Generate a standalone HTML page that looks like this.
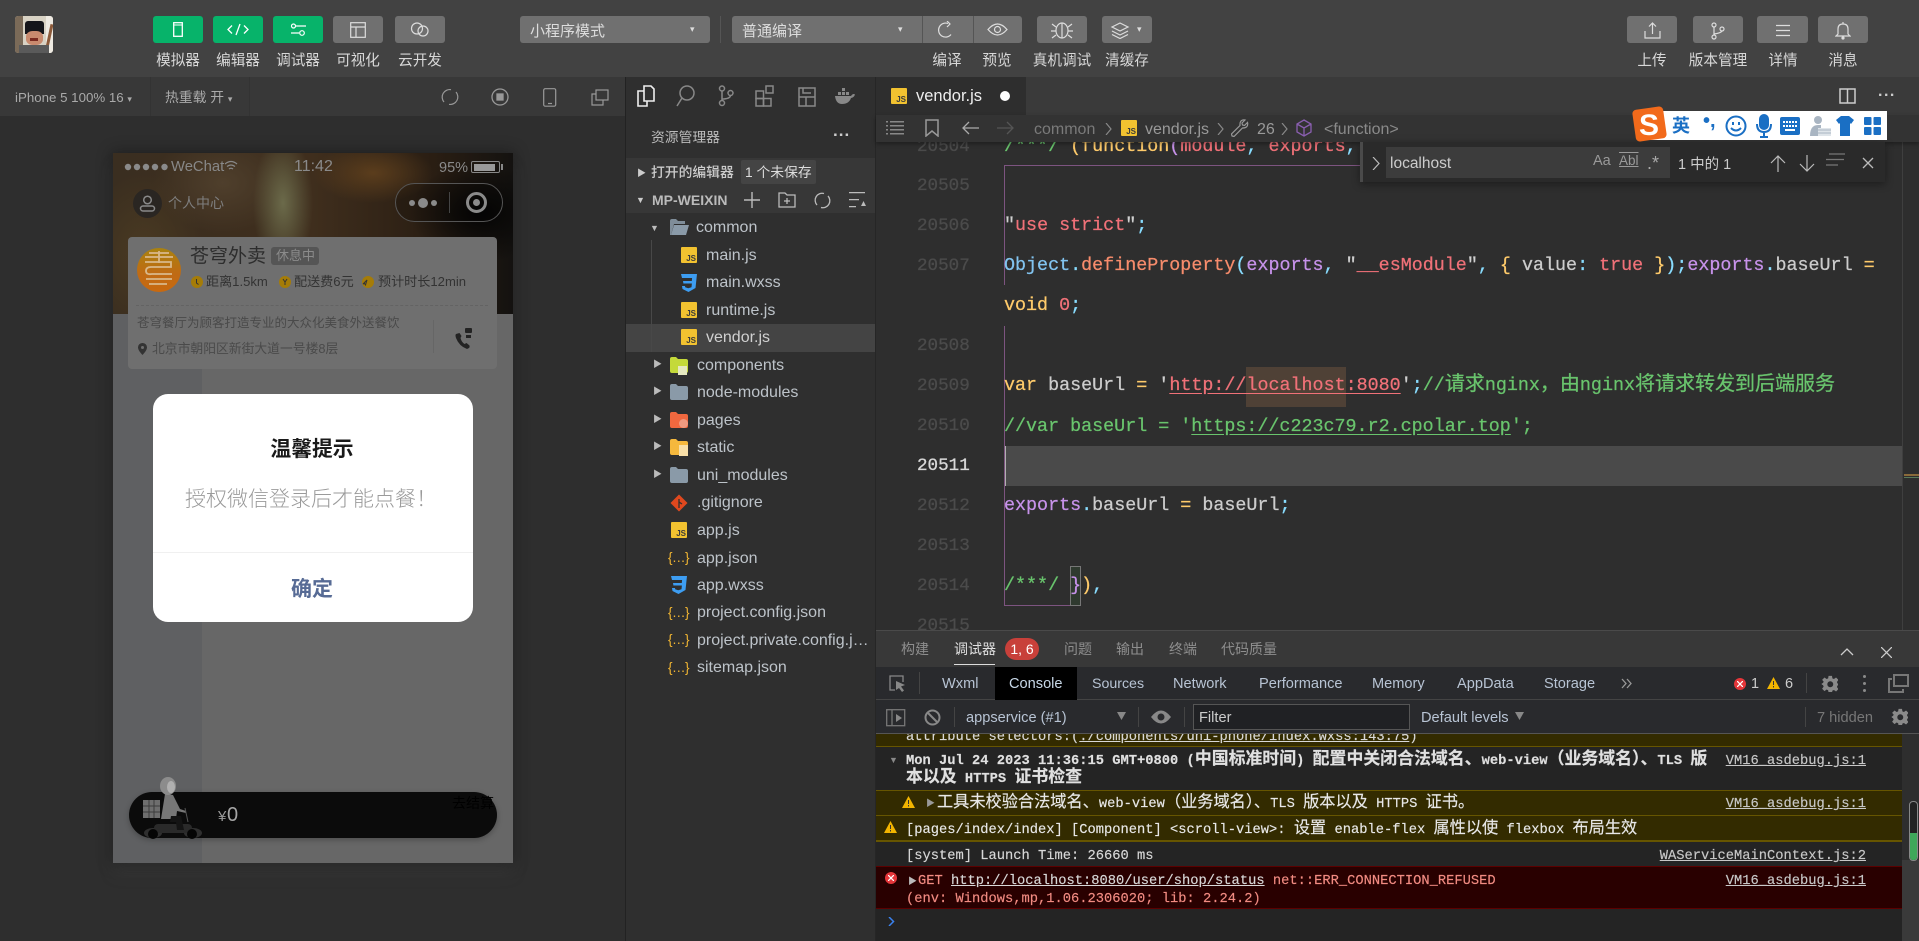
<!DOCTYPE html>
<html><head><meta charset="utf-8"><title>微信开发者工具</title>
<style>
*{box-sizing:border-box;margin:0;padding:0}
html,body{width:1919px;height:941px;overflow:hidden;background:#2e2e2e}
body{position:relative;font-family:"Liberation Sans","Noto Sans CJK SC",sans-serif;color:#ccc}
.a,.t,.c,svg.i{position:absolute}
.t,.c{white-space:nowrap;line-height:20px}
.c{transform:translateX(-50%)}
.b{position:absolute;top:16px;height:27px;width:50px;background:#707070;border-radius:3px}
.g{background:#07b36a}
.l{font-size:14.6px;color:#d8d8d8;top:51px}
.cd{position:absolute;left:1004px;font:18.36px/20px "Liberation Mono",monospace;white-space:pre;-webkit-text-stroke:.25px;color:#ccc}
.cd i{font:20px/0 "Noto Sans CJK SC",sans-serif}
.n{position:absolute;left:917px;font:17.6px/20px "Liberation Mono",monospace;color:#4b4b4b;-webkit-text-stroke:.3px}
.R{color:#f07178}.Y{color:#ffcb6b}.B{color:#89ddff}.P{color:#c792ea}.G{color:#69c46d}.U{color:#82c4f0}.O{color:#f78c6c}.W{color:#d0d0d0}
.f{font-size:16px;color:#bdc3c9}
.js{position:absolute;width:16px;height:16px;background:#f2c230;color:#3a3a3a;font:bold 8px/9px "Liberation Sans",sans-serif;text-align:right;padding:7px 1px 0 0;border-radius:1px}
.je{position:absolute;color:#f2b632;font:13.5px/20px "Liberation Sans",sans-serif;letter-spacing:-.5px;white-space:nowrap}
.tw{font-size:14px;color:#8e8e8e;top:639px}
.dv{font-size:14.6px;color:#b8c4d4;top:674px}
.m{position:absolute;font:13.75px/20px "Liberation Mono",monospace;white-space:pre;color:#d8d8d8;-webkit-text-stroke:.15px}
.m i{font:16.2px/0 "Noto Sans CJK SC",sans-serif}
.m.bd{font-weight:bold}
.m.bd i{font:bold 16.9px/0 "Noto Sans CJK SC",sans-serif}
.lk{left:auto;right:53px;text-decoration:underline;color:#c8c8c8}
.s{stroke:#bbb;fill:none;stroke-width:1.4}
</style></head><body>
<svg width="0" height="0" style="position:absolute"><defs>
<symbol id="fo" viewBox="0 0 18 16"><path d="M0 2q0-2 2-2h4l2 2h8q2 0 2 2v10q0 2-2 2H2q-2 0-2-2z"/></symbol>
<symbol id="css" viewBox="0 0 18 18"><path d="M1 0h16l-1.500 14L8.500 18 2.500 15l-.5-3h3l.2 1.200 3 1 3.300-1 .4-3.700H3.400L3 7h8.800l.3-3H2z" fill="#3d9df2"/></symbol>
<symbol id="ge" viewBox="0 0 20 20"><path fill-rule="evenodd" d="M8 0h4l.5 3 1.800.8L16.800 2l2.800 2.800-1.800 2.500.8 1.900 3 .5v1l-3 .6-.8 1.900 1.800 2.500-2.800 2.800-2.500-1.800-1.800.8L12 20H8l-.5-3-1.800-.8L3.200 18 .4 15.200l1.800-2.500-.8-1.900-3-.6v-1l3-.5.800-1.900L.4 4.800 3.200 2l2.500 1.800L7.500 3zM10 6.500a3.500 3.500 0 100 7 3.500 3.500 0 000-7z" fill="#8a8a8a"/></symbol>
</defs></svg>

<!-- code layer -->
<div class="a" style="left:876px;top:115px;width:1043px;height:520px;background:#2e2e2e"></div>
<div class="a" style="left:1004px;top:446px;width:898px;height:40px;background:#4a4a4a"></div>
<div class="a" style="left:1004px;top:446px;width:2px;height:40px;background:#b0b0b0"></div>
<div class="a" style="left:1246px;top:367px;width:100px;height:40px;background:#4f4136"></div>
<div class="a" style="left:1004px;top:165px;width:356px;height:1px;background:#7d5480"></div>
<div class="a" style="left:1004px;top:165px;width:1px;height:120px;background:#7d5480"></div>
<div class="a" style="left:1004px;top:326px;width:1px;height:280px;background:#7d5480"></div>
<div class="a" style="left:1004px;top:605px;width:76px;height:1px;background:#7d5480"></div>
<div class="a" style="left:1070px;top:566px;width:11px;height:40px;background:#2f3a2f;border:1px solid #777"></div>

<div class="n" style="top:137px">20504</div><div class="n" style="top:176px">20505</div><div class="n" style="top:216px">20506</div><div class="n" style="top:256px">20507</div><div class="n" style="top:336px">20508</div><div class="n" style="top:376px">20509</div><div class="n" style="top:416px">20510</div><div class="n" style="top:456px;color:#d8d8d8">20511</div><div class="n" style="top:496px">20512</div><div class="n" style="top:536px">20513</div><div class="n" style="top:576px">20514</div><div class="n" style="top:616px">20515</div>

<div class="cd" style="top:137px"><span class="G">/***/</span> <span class="Y">(function</span><span class="P">(</span><span class="R">module</span><span class="B">,</span> <span class="R">exports</span><span class="B">,</span></div>
<div class="cd" style="top:216px"><span class="W">"</span><span class="R">use strict</span><span class="W">"</span><span class="B">;</span></div>
<div class="cd" style="top:256px"><span class="U">Object</span><span class="B">.</span><span class="O">defineProperty</span><span class="B">(</span><span class="P">exports</span><span class="B">,</span> <span class="W">"</span><span class="R">__esModule</span><span class="W">"</span><span class="B">,</span> <span class="Y">{</span> value<span class="B">:</span> <span class="R">true</span> <span class="Y">}</span><span class="B">);</span><span class="P">exports</span><span class="B">.</span>baseUrl <span class="Y">=</span></div>
<div class="cd" style="top:296px"><span class="Y">void</span> <span class="R">0</span><span class="B">;</span></div>
<div class="cd" style="top:376px"><span class="Y">var</span> baseUrl <span class="Y">=</span> <span class="W">'</span><span class="R" style="text-decoration:underline;text-underline-offset:3px">http://localhost:8080</span><span class="W">'</span><span class="B">;</span><span class="G">//<i>请求</i>nginx<i>，由</i>nginx<i>将请求转发到后端服务</i></span></div>
<div class="cd" style="top:417px"><span class="G">//var baseUrl = '<span style="text-decoration:underline;text-underline-offset:3px">https://c223c79.r2.cpolar.top</span>';</span></div>
<div class="cd" style="top:496px"><span class="P">exports</span><span class="B">.</span>baseUrl <span class="Y">=</span> baseUrl<span class="B">;</span></div>
<div class="cd" style="top:576px"><span class="G">/***/</span> <span class="P">}</span><span class="Y">)</span><span class="B">,</span></div>

<!-- minimap -->
<div class="a" style="left:1902px;top:115px;width:1px;height:515px;background:#3f3f3f"></div>
<div class="a" style="left:1904px;top:474px;width:15px;height:2px;background:#8a6a3a"></div>
<div class="a" style="left:1904px;top:477px;width:15px;height:1px;background:#5a7a5a"></div>

<!-- main toolbar -->
<div class="a" style="left:0;top:0;width:1919px;height:77px;background:#424242"></div>
<!-- avatar -->
<div class="a" style="left:15px;top:16px;width:38px;height:37px;border-radius:3px;overflow:hidden;background:#d8d2c4">
 <div class="a" style="left:0;top:0;width:8px;height:37px;background:#7a6a58"></div>
 <div class="a" style="left:31px;top:0;width:7px;height:37px;background:#eeeae2"></div>
 <div class="a" style="left:33px;top:8px;width:3px;height:24px;background:#8c5a3a;transform:rotate(12deg)"></div>
 <div class="a" style="left:10px;top:5px;width:19px;height:13px;background:#15151a;border-radius:3px 3px 0 0"></div>
 <div class="a" style="left:11px;top:15px;width:17px;height:14px;background:#c98a6e;border-radius:40%"></div>
 <div class="a" style="left:4px;top:29px;width:30px;height:8px;background:#5a5a5a"></div>
 <div class="a" style="left:15px;top:22px;width:8px;height:3px;background:#7a2a20"></div>
</div>

<div class="b g" style="left:153px"><svg class="i" style="left:20px;top:6px" width="10" height="15"><rect x=".7" y=".7" width="8.600" height="13.600" fill="none" stroke="#fff" stroke-width="1.300"/><path d="M1 3h8" stroke="#fff"/></svg></div>
<div class="b g" style="left:213px"><svg class="i" style="left:14px;top:7px" width="22" height="13" fill="none" stroke="#fff" stroke-width="1.300"><path d="M5 2.500 1 6.500l4 4M17 2.500l4 4-4 4M13 1 9 12"/></svg></div>
<div class="b g" style="left:273px"><svg class="i" style="left:17px;top:7px" width="17" height="14" fill="none" stroke="#fff" stroke-width="1.200"><circle cx="3.500" cy="3" r="2"/><path d="M6 3h10M1 10h8"/><circle cx="12" cy="10" r="2.300"/></svg></div>
<div class="b" style="left:333px"><svg class="i" style="left:17px;top:6px" width="16" height="16" fill="none" stroke="#ddd" stroke-width="1.200"><rect x=".7" y=".7" width="14.600" height="14.600"/><path d="M1 5h14M6 5v10"/></svg></div>
<div class="b" style="left:395px"><svg class="i" style="left:15px;top:6px" width="20" height="15" fill="none" stroke="#ddd" stroke-width="1.200"><circle cx="7" cy="6.500" r="5.500"/><circle cx="13" cy="9" r="5"/></svg></div>
<div class="c l" style="left:178px">模拟器</div><div class="c l" style="left:238px">编辑器</div><div class="c l" style="left:298px">调试器</div><div class="c l" style="left:358px">可视化</div><div class="c l" style="left:420px">云开发</div>

<div class="b" style="left:520px;width:190px"></div>
<div class="t" style="left:530px;top:22px;font-size:15px;color:#ddd">小程序模式</div>
<div class="t" style="left:690px;top:19px;font-size:9px;color:#ddd">▾</div>
<div class="a" style="left:720px;top:16px;width:1px;height:27px;background:#555"></div>
<div class="b" style="left:732px;width:290px"></div>
<div class="a" style="left:922px;top:16px;width:1px;height:27px;background:#555"></div>
<div class="a" style="left:973px;top:16px;width:1px;height:27px;background:#555"></div>
<div class="t" style="left:742px;top:22px;font-size:15px;color:#ddd">普通编译</div>
<div class="t" style="left:898px;top:19px;font-size:9px;color:#ddd">▾</div>
<svg class="i" style="left:936px;top:21px" width="20" height="18" fill="none" stroke="#ddd" stroke-width="1.200"><path d="M15 13.500A7 7 0 1 1 12 2.500"/><path d="M11 0l3 3-3 3"/></svg>
<svg class="i" style="left:987px;top:22px" width="21" height="15" fill="none" stroke="#ddd" stroke-width="1.200"><path d="M1 7.500Q10.500-3.500 20 7.500 10.500 18.500 1 7.500z"/><circle cx="10.500" cy="7.500" r="3"/></svg>
<div class="b" style="left:1037px"></div>
<svg class="i" style="left:1050px;top:20px" width="24" height="19" fill="none" stroke="#ddd" stroke-width="1.200"><ellipse cx="12" cy="10.500" rx="6" ry="7.500"/><path d="M12 3v15M6 7 2 4M6 11H1M6 15l-4 3M18 7l4-3M18 11h5M18 15l4 3"/></svg>
<div class="b" style="left:1102px"></div>
<svg class="i" style="left:1110px;top:22px" width="20" height="17" fill="none" stroke="#ddd" stroke-width="1.200"><path d="M10 1l8 4-8 4-8-4zM2 9l8 4 8-4M2 12.500l8 4 8-4"/></svg>
<div class="t" style="left:1137px;top:19px;font-size:9px;color:#ddd">▾</div>
<div class="c l" style="left:947px">编译</div><div class="c l" style="left:997px">预览</div><div class="c l" style="left:1062px">真机调试</div><div class="c l" style="left:1127px">清缓存</div>

<div class="b" style="left:1627px"></div><svg class="i" style="left:1644px;top:22px" width="17" height="17" fill="none" stroke="#ddd" stroke-width="1.200"><path d="M8.500 12V1M5 4.500 8.500 1 12 4.500M1 9v7h15V9"/></svg>
<div class="b" style="left:1693px"></div><svg class="i" style="left:1711px;top:22px" width="14" height="18" fill="none" stroke="#ddd" stroke-width="1.200"><circle cx="3" cy="3" r="2"/><circle cx="3" cy="15" r="2"/><circle cx="11" cy="7" r="2"/><path d="M3 5v8M3 12q7-1 8-3"/></svg>
<div class="b" style="left:1757px;width:51px"></div><svg class="i" style="left:1776px;top:24px" width="14" height="13" stroke="#ddd" stroke-width="1.200"><path d="M0 1.500h14M0 6.500h14M0 11.500h14"/></svg>
<div class="b" style="left:1818px"></div><svg class="i" style="left:1835px;top:21px" width="16" height="19" fill="none" stroke="#ddd" stroke-width="1.200"><path d="M8 3q-5 0-5 5v5l-2 2h14l-2-2V8q0-5-5-5zM8 1v2"/><circle cx="8" cy="17" r="1" fill="#ddd"/></svg>
<div class="c l" style="left:1652px">上传</div><div class="c l" style="left:1718px">版本管理</div><div class="c l" style="left:1783px">详情</div><div class="c l" style="left:1843px">消息</div>

<!-- simulator -->
<div class="a" style="left:0;top:77px;width:625px;height:39px;background:#383838"></div>
<div class="a" style="left:150px;top:77px;width:1px;height:39px;background:#333"></div>
<div class="a" style="left:249px;top:77px;width:1px;height:39px;background:#333"></div>
<div class="t" style="left:15px;top:88px;font-size:13.300px;color:#aaa">iPhone 5 100% 16 <span style="font-size:9px">▾</span></div>
<div class="t" style="left:165px;top:88px;font-size:13.800px;color:#aaa">热重载 开 <span style="font-size:9px">▾</span></div>
<svg class="i" style="left:441px;top:88px" width="18" height="18" fill="none" stroke="#999" stroke-width="1.200"><path d="M3 14A7.500 7.500 0 0 1 10 1.700M15 4a7.500 7.500 0 0 1-7 12.300"/></svg>
<svg class="i" style="left:491px;top:88px" width="18" height="18" fill="none" stroke="#999" stroke-width="1.300"><circle cx="9" cy="9" r="8"/><rect x="6" y="6" width="6" height="6" fill="#999"/></svg>
<svg class="i" style="left:543px;top:88px" width="14" height="19" fill="none" stroke="#999" stroke-width="1.200"><rect x=".7" y=".7" width="12" height="17.500" rx="1.500"/><path d="M5 15.500h4"/></svg>
<svg class="i" style="left:591px;top:89px" width="18" height="17" fill="none" stroke="#999" stroke-width="1.200"><rect x="5" y="1" width="12" height="10"/><path d="M5 5H1v11h11v-5"/></svg>

<!-- phone -->
<div class="a" style="left:113px;top:153px;width:400px;height:710px;background:#676767;box-shadow:0 0 14px 2px rgba(0,0,0,.3),0 12px 14px rgba(90,90,90,.18)"></div>
<div class="a" style="left:113px;top:153px;width:89px;height:710px;background:#5f6062"></div>
<div class="a" style="left:113px;top:153px;width:400px;height:161px;background:
 radial-gradient(ellipse 30px 70px at 170px 50px,#6b6a4a 0,rgba(107,106,74,0) 100%),
 radial-gradient(ellipse 70px 50px at 110px 30px,#4f3f2c 0,rgba(79,63,44,0) 100%),
 radial-gradient(ellipse 60px 30px at 260px 20px,#5b3d1c 0,rgba(91,61,28,0) 100%),
 radial-gradient(ellipse 70px 50px at 367px 60px,#040404 0,rgba(4,4,4,0) 100%),
 radial-gradient(ellipse 60px 80px at 30px 100px,#4a3a22 0,rgba(74,58,34,0) 100%),
 linear-gradient(90deg,#3a2e20,#3f2e1d 50%,#2a1e13 80%,#141210);overflow:hidden"></div>

<svg class="i" style="left:124px;top:163px" width="46" height="8" fill="#8a8a8a"><circle cx="4" cy="4" r="3.200"/><circle cx="13" cy="4" r="3.200"/><circle cx="22" cy="4" r="3.200"/><circle cx="31" cy="4" r="3.200"/><circle cx="40.500" cy="4" r="3.200"/></svg>
<div class="t" style="left:171px;top:157px;font-size:14.800px;color:#888">WeChat</div>
<svg class="i" style="left:224px;top:160px" width="14" height="12" fill="none" stroke="#888" stroke-width="1.300"><path d="M1 4q6-5 12 0M3 6.500q4-3 8 0M5 9q2-1.500 4 0"/></svg>
<div class="t" style="left:294px;top:157px;font-size:16px;color:#8a8a8a">11:42</div>
<div class="t" style="left:439px;top:158px;font-size:14.500px;color:#8a8a8a">95%</div>
<div class="a" style="left:471px;top:161px;width:29px;height:12px;border:1px solid #888;border-radius:2px;padding:1.500px"><div style="width:21px;height:7px;background:#999"></div></div>
<div class="a" style="left:501px;top:164px;width:2px;height:6px;background:#888"></div>

<div class="a" style="left:133px;top:189px;width:29px;height:29px;border-radius:50%;background:#2a2622"></div>
<svg class="i" style="left:139px;top:195px" width="17" height="17" fill="none" stroke="#8a8a8a" stroke-width="1.500"><circle cx="8.500" cy="5" r="3.800"/><rect x="1.500" y="11" width="14" height="5" rx="2.500"/></svg>
<div class="t" style="left:168px;top:193px;font-size:14px;color:#7e7e7e">个人中心</div>
<div class="a" style="left:395px;top:183px;width:108px;height:39px;border:1px solid #555;border-radius:20px;background:rgba(5,5,5,.2)"></div>
<div class="a" style="left:409px;top:200px;width:6px;height:6px;border-radius:50%;background:#8a8a8a"></div><div class="a" style="left:418px;top:198px;width:10px;height:10px;border-radius:50%;background:#8a8a8a"></div><div class="a" style="left:431px;top:200px;width:6px;height:6px;border-radius:50%;background:#8a8a8a"></div>
<div class="a" style="left:449px;top:192px;width:1px;height:21px;background:#444"></div>
<div class="a" style="left:466px;top:192px;width:21px;height:21px;border:3px solid #8a8a8a;border-radius:50%"></div><div class="a" style="left:473px;top:199px;width:7px;height:7px;background:#8a8a8a;border-radius:50%"></div>

<!-- card -->
<div class="a" style="left:128px;top:237px;width:369px;height:132px;background:#6f6f6f;border-radius:4px"></div>
<div class="a" style="left:137px;top:248px;width:44px;height:44px;border-radius:50%;background:linear-gradient(#a9820f,#c06a14 60%,#c8690f)"></div>
<svg class="i" style="left:137px;top:248px" width="44" height="44" fill="none" stroke="#d9b88a" stroke-width="1.800"><path d="M12 5h20M8 9h28M22 3v12M8 14h26v5H14q-5 0-5 4t6 3h20M9 31h26M12 36h18"/></svg>
<div class="t" style="left:190px;top:247px;font-size:19px;color:#2d2d2d">苍穹外卖</div>
<div class="a" style="left:271px;top:247px;width:48px;height:18px;background:#555;border-radius:3px"></div>
<div class="t" style="left:276px;top:246px;font-size:13px;color:#8b8b8b">休息中</div>
<div class="a" style="left:191px;top:276px;width:12px;height:12px;border-radius:50%;background:#a57c08"></div><div class="a" style="left:279px;top:276px;width:12px;height:12px;border-radius:50%;background:#a57c08"></div><div class="a" style="left:362px;top:276px;width:12px;height:12px;border-radius:50%;background:#a57c08"></div>
<svg class="i" style="left:191px;top:276px" width="190" height="12" fill="none" stroke="#333" stroke-width="1"><path d="M5.500 3v4l2 1.500M92 3l2 3 2-3M94 6v3M172 8l4-4-1.500 5-1-1.500z"/></svg>
<div class="t" style="left:206px;top:272px;font-size:13.100px;color:#333">距离1.5km</div>
<div class="t" style="left:294px;top:272px;font-size:13.100px;color:#333">配送费6元</div>
<div class="t" style="left:378px;top:272px;font-size:13.100px;color:#333">预计时长12min</div>
<div class="a" style="left:136px;top:305px;width:352px;border-top:1px dashed #636363"></div>
<div class="t" style="left:137px;top:313px;font-size:12.500px;color:#4a4a4a">苍穹餐厅为顾客打造专业的大众化美食外送餐饮</div>
<svg class="i" style="left:138px;top:343px" width="9" height="12"><path fill-rule="evenodd" d="M4.500 0A4.400 4.400 0 0 0 0 4.500C0 7.500 4.500 12 4.500 12S9 7.500 9 4.500A4.400 4.400 0 0 0 4.500 0zm0 3a1.500 1.500 0 1 1 0 3 1.500 1.500 0 0 1 0-3z" fill="#333"/></svg>
<div class="t" style="left:152px;top:339px;font-size:12.800px;color:#4a4a4a">北京市朝阳区新街大道一号楼8层</div>
<div class="a" style="left:433px;top:320px;width:1px;height:33px;background:#666"></div>
<svg class="i" style="left:455px;top:327px" width="19" height="22"><path d="M1 7q-1 1 0 4 3 8 11 11l2-1q1-1 .5-2.500l-3-2.500-2 1q-3-2-4-6l1-2-2-3z" fill="#232323"/><rect x="10" y="1" width="7" height="5" rx="1" fill="#232323"/><path d="M11 8h5v3h-5z" fill="#232323"/></svg>

<!-- dialog -->
<div class="a" style="left:153px;top:394px;width:320px;height:228px;background:#fff;border-radius:15px"></div>
<div class="c" style="left:312px;top:440px;font-size:20.800px;font-weight:bold;color:#1a1a1a">温馨提示</div>
<div class="t" style="left:185px;top:490px;font-size:21px;color:#9a9a9a;font-weight:300">授权微信登录后才能点餐！</div>
<div class="a" style="left:153px;top:552px;width:320px;height:1px;background:#f0f0f0"></div>
<div class="c" style="left:312px;top:580px;font-size:21px;font-weight:bold;color:#576b95">确定</div>

<!-- cart -->
<div class="a" style="left:129px;top:792px;width:368px;height:46px;background:#0b0b0b;border-radius:23px;box-shadow:0 2px 6px rgba(0,0,0,.25)"></div>
<svg class="i" style="left:140px;top:776px" width="64" height="64">
 <rect x="3" y="24" width="17" height="18" fill="#6e6e6e"/><path d="M3 30h17M3 36h17M9 24v18M14 24v18" stroke="#3c3c3c"/>
 <ellipse cx="13" cy="57" rx="9" ry="5" fill="#2f2f2f"/><ellipse cx="53" cy="57" rx="9" ry="5" fill="#2f2f2f"/><rect x="14" y="48" width="38" height="9" rx="4" fill="#2a2a2a"/>
 <circle cx="13" cy="58" r="5" fill="#050505"/><circle cx="52" cy="58" r="5" fill="#050505"/>
 <path d="M25 18l8 1 7 14 6 2v2l-9-2-1 8H21z" fill="#777"/><path d="M31 40h10l3 14h-7l-1-8h-6z" fill="#141414"/>
 <ellipse cx="28" cy="10" rx="8" ry="9" fill="#8c8c8c"/><ellipse cx="31" cy="11" rx="4" ry="6" fill="#b0b0b0"/><path d="M45 32l3 14" stroke="#555"/>
</svg>
<div class="t" style="left:218px;top:807px;font-size:15px;color:#9a9a9a">¥</div>
<div class="t" style="left:227px;top:805px;font-size:20px;color:#a5a5a5">0</div>
<div class="t" style="left:452px;top:793px;font-size:14px;color:#000">去结算</div>

<!-- file tree -->
<div class="a" style="left:625px;top:77px;width:1px;height:864px;background:#222"></div>
<div class="a" style="left:626px;top:77px;width:250px;height:864px;background:#2f2f2f"></div>
<div class="a" style="left:875px;top:77px;width:1px;height:864px;background:#262626"></div>
<svg class="i" style="left:637px;top:85px" width="18" height="22" fill="none" stroke="#eee" stroke-width="1.600"><path d="M7 1h7l3 3v12H7zM7 6H1v15h9v-5"/></svg>
<svg class="i" style="left:676px;top:85px" width="20" height="22" fill="none" stroke="#888" stroke-width="1.500"><circle cx="11" cy="8" r="7"/><path d="M6 13l-5 8"/></svg>
<svg class="i" style="left:718px;top:85px" width="16" height="22" fill="none" stroke="#888" stroke-width="1.500"><circle cx="4" cy="3.500" r="2.500"/><circle cx="4" cy="18" r="2.500"/><circle cx="12.500" cy="8" r="2.500"/><path d="M4 6v9.500M4 14q8 0 8.500-3.500"/></svg>
<svg class="i" style="left:755px;top:85px" width="19" height="22" fill="none" stroke="#888" stroke-width="1.500"><rect x="1" y="6" width="7.500" height="7.500"/><rect x="1" y="13.500" width="7.500" height="7.500"/><rect x="8.500" y="13.500" width="7.500" height="7.500"/><rect x="11" y="1" width="7" height="7"/></svg>
<svg class="i" style="left:798px;top:87px" width="18" height="20" fill="none" stroke="#888" stroke-width="1.500"><rect x="1" y="1" width="16" height="18"/><path d="M1 10h16M5 1v5h8M8 10v9"/></svg>
<svg class="i" style="left:835px;top:88px" width="21" height="16"><path d="M0 8h16q2-3 4-1.500-1 3-4 3.500-2 6-9 6Q1 16 0 8z" fill="#888"/><rect x="3" y="4" width="3" height="3" fill="#888"/><rect x="7" y="4" width="3" height="3" fill="#888"/><rect x="11" y="4" width="3" height="3" fill="#888"/><rect x="7" y="0" width="3" height="3" fill="#888"/></svg>
<div class="t" style="left:651px;top:128px;font-size:13.800px;color:#bbb">资源管理器</div>
<div class="t" style="left:833px;top:121px;font-size:17px;font-weight:bold;color:#ccc;letter-spacing:1px">...</div>

<div class="a" style="left:626px;top:158px;width:249px;height:55px;background:#373737"></div>
<div class="t" style="left:637px;top:163px;font-size:9px;color:#ccc">▶</div>
<div class="t" style="left:651px;top:163px;font-size:13.800px;font-weight:500;color:#ccc">打开的编辑器</div>
<div class="a" style="left:741px;top:160px;width:75px;height:24px;background:#444;border-radius:2px"></div>
<div class="t" style="left:745px;top:163px;font-size:13.800px;color:#ddd">1 个未保存</div>
<div class="t" style="left:636px;top:190px;font-size:9px;color:#ccc">▼</div>
<div class="t" style="left:652px;top:190px;font-size:14px;font-weight:bold;color:#bbb">MP-WEIXIN</div>
<svg class="i" style="left:744px;top:192px" width="16" height="16" stroke="#bbb" stroke-width="1.400"><path d="M8 0v16M0 8h16"/></svg>
<svg class="i" style="left:778px;top:192px" width="18" height="16" fill="none" stroke="#bbb" stroke-width="1.300"><path d="M1 1h6l2 2h8v12H1zM9 6v6M6 9h6"/></svg>
<svg class="i" style="left:814px;top:192px" width="17" height="17" fill="none" stroke="#bbb" stroke-width="1.300"><path d="M3 13A7 7 0 0 1 10 1.500M14 4a7 7 0 0 1-7 11.500"/></svg>
<svg class="i" style="left:849px;top:192px" width="17" height="16" fill="#bbb"><path d="M0 0h16v1.300H0zM0 7h10v1.300H0zM0 14h7v1.300H0zM12 14l2.500-5 2.500 5z"/></svg>

<div class="a" style="left:626px;top:324px;width:249px;height:28px;background:#444"></div>
<div class="a" style="left:651px;top:240px;width:1px;height:112px;background:#484848"></div>
<div class="t" style="left:650px;top:218px;font-size:9px;color:#bbb">▼</div>
<svg class="i" style="left:670px;top:219px" width="19" height="17"><path d="M0 2q0-2 2-2h4l2 2h7v3H4L1 16H0z" fill="#7f8d99"/><path d="M4 6h15l-3 10H1z" fill="#8a9aa8"/></svg>
<div class="t f" style="left:696px;top:218px">common</div>
<div class="js" style="left:681px;top:247px">JS</div><div class="t f" style="left:706px;top:246px">main.js</div>
<svg class="i" style="left:680px;top:274px" width="18" height="18"><use href="#css"/></svg><div class="t f" style="left:706px;top:273px">main.wxss</div>
<div class="js" style="left:681px;top:302px">JS</div><div class="t f" style="left:706px;top:301px">runtime.js</div>
<div class="js" style="left:681px;top:329px">JS</div><div class="t f" style="left:706px;top:328px;color:#d0d0d0">vendor.js</div>

<div class="t" style="left:653px;top:354px;font-size:9px;color:#bbb">▶</div>
<svg class="i" style="left:670px;top:357px" width="18" height="16" fill="#c4d93a"><use href="#fo"/></svg><div class="a" style="left:678px;top:366px;width:9px;height:9px;background:#e5e8c0"></div><div class="t f" style="left:697px;top:356px">components</div>
<div class="t" style="left:653px;top:381px;font-size:9px;color:#bbb">▶</div>
<svg class="i" style="left:670px;top:384px" width="18" height="16" fill="#8a9aa8"><use href="#fo"/></svg><div class="t f" style="left:697px;top:383px">node-modules</div>
<div class="t" style="left:653px;top:409px;font-size:9px;color:#bbb">▶</div>
<svg class="i" style="left:670px;top:412px" width="18" height="16" fill="#f0683f"><use href="#fo"/></svg><div class="a" style="left:679px;top:419px;width:9px;height:9px;background:#f09a80;border-radius:50%"></div><div class="t f" style="left:697px;top:411px">pages</div>
<div class="t" style="left:653px;top:436px;font-size:9px;color:#bbb">▶</div>
<svg class="i" style="left:670px;top:439px" width="18" height="16" fill="#f5b83d"><use href="#fo"/></svg><div class="a" style="left:679px;top:445px;width:9px;height:11px;background:#f8dfa8"></div><div class="t f" style="left:697px;top:438px">static</div>
<div class="t" style="left:653px;top:464px;font-size:9px;color:#bbb">▶</div>
<svg class="i" style="left:670px;top:467px" width="18" height="16" fill="#8a9aa8"><use href="#fo"/></svg><div class="t f" style="left:697px;top:466px">uni_modules</div>
<svg class="i" style="left:670px;top:494px" width="18" height="18"><rect x="3" y="3" width="12" height="12" transform="rotate(45 9 9)" fill="#e0481e"/><path d="M9 5v9M9 8l3 2" stroke="#2f2f2f" stroke-width="1.300"/></svg><div class="t f" style="left:697px;top:493px">.gitignore</div>
<div class="js" style="left:671px;top:522px">JS</div><div class="t f" style="left:697px;top:521px">app.js</div>
<div class="je" style="left:668px;top:548px">{…}</div><div class="t f" style="left:697px;top:549px">app.json</div>
<svg class="i" style="left:670px;top:576px" width="18" height="18"><use href="#css"/></svg><div class="t f" style="left:697px;top:576px">app.wxss</div>
<div class="je" style="left:668px;top:603px">{…}</div><div class="t f" style="left:697px;top:603px">project.config.json</div>
<div class="je" style="left:668px;top:630px">{…}</div><div class="t f" style="left:697px;top:631px;width:177px;overflow:hidden;text-overflow:ellipsis">project.private.config.json</div>
<div class="je" style="left:668px;top:658px">{…}</div><div class="t f" style="left:697px;top:658px">sitemap.json</div>

<!-- editor tabs -->
<div class="a" style="left:876px;top:77px;width:1043px;height:38px;background:#3a3a3a"></div>
<div class="a" style="left:876px;top:77px;width:150px;height:38px;background:#2e2e2e"></div>
<div class="js" style="left:891px;top:88px">JS</div>
<div class="t" style="left:916px;top:86px;font-size:16.500px;color:#eee">vendor.js</div>
<div class="a" style="left:1000px;top:91px;width:10px;height:10px;border-radius:50%;background:#fff"></div>
<svg class="i" style="left:1839px;top:88px" width="17" height="16" fill="none" stroke="#ccc" stroke-width="1.500"><rect x="1" y="1" width="15" height="14"/><path d="M8.500 1v14"/></svg>
<div class="t" style="left:1878px;top:82px;font-size:16px;font-weight:bold;color:#ccc;letter-spacing:1.500px">...</div>
<!-- breadcrumb -->
<div class="a" style="left:876px;top:115px;width:1043px;height:27px;background:#333;box-shadow:0 2px 4px rgba(0,0,0,.35)"></div>
<svg class="i" style="left:886px;top:121px" width="18" height="14" fill="#888"><path d="M0 0h2v1.500H0zM4 0h14v1.500H4zM0 4h2v1.500H0zM4 4h14v1.500H4zM0 8h2v1.500H0zM4 8h14v1.500H4zM0 12h2v1.500H0zM4 12h14v1.500H4z"/></svg>
<svg class="i" style="left:925px;top:119px" width="14" height="18" fill="none" stroke="#999" stroke-width="1.500"><path d="M1 1h12v16l-6-5-6 5z"/></svg>
<svg class="i" style="left:962px;top:121px" width="17" height="14" fill="none" stroke="#aaa" stroke-width="1.300"><path d="M17 7H1M7 1 1 7l6 6"/></svg>
<svg class="i" style="left:997px;top:121px" width="17" height="14" fill="none" stroke="#555" stroke-width="1.300"><path d="M0 7h16M10 1l6 6-6 6"/></svg>
<div class="t" style="left:1034px;top:120px;font-size:16px;color:#7a7a7a">common</div>
<svg class="i" style="left:1105px;top:123px" width="7" height="12" fill="none" stroke="#888" stroke-width="1.200"><path d="M1 0l5 6-5 6"/></svg>
<div class="js" style="left:1121px;top:120px">JS</div>
<div class="t" style="left:1145px;top:120px;font-size:16px;color:#999">vendor.js</div>
<svg class="i" style="left:1217px;top:123px" width="7" height="12" fill="none" stroke="#888" stroke-width="1.200"><path d="M1 0l5 6-5 6"/></svg>
<svg class="i" style="left:1231px;top:119px" width="18" height="18" fill="none" stroke="#999" stroke-width="1.200"><path d="M1 17l-.5-2L9 6.500Q8.500 1 13 .8l1 .2-3 3 .5 2 2 .5 3-3 .2 1Q17 9 11.500 9L3 17.500z"/></svg>
<div class="t" style="left:1257px;top:120px;font-size:16px;color:#999">26</div>
<svg class="i" style="left:1281px;top:123px" width="7" height="12" fill="none" stroke="#888" stroke-width="1.200"><path d="M1 0l5 6-5 6"/></svg>
<svg class="i" style="left:1296px;top:119px" width="16" height="18" fill="none" stroke="#8a5fb0" stroke-width="1.300"><path d="M8 1l7 4v8l-7 4-7-4V5zM1 5l7 4 7-4M8 9v8"/></svg>
<div class="t" style="left:1324px;top:120px;font-size:16px;color:#8a8a8a">&lt;function&gt;</div>

<!-- find widget -->
<div class="a" style="left:1360px;top:142px;width:525px;height:40px;background:#2a2a2a;border-left:3px solid #4a4a4a;box-shadow:0 2px 8px rgba(0,0,0,.4)"></div>
<svg class="i" style="left:1372px;top:157px" width="8" height="13" fill="none" stroke="#bbb" stroke-width="1.200"><path d="M1 0l6 6.500L1 13"/></svg>
<div class="a" style="left:1386px;top:147px;width:284px;height:31px;background:#3c3c3c"></div>
<div class="t" style="left:1390px;top:154px;font-size:15.500px;color:#ccc">localhost</div>
<div class="t" style="left:1593px;top:151px;font-size:14.500px;color:#9a9a9a">Aa</div>
<div class="t" style="left:1619px;top:151px;font-size:13.500px;color:#9a9a9a;text-decoration:underline overline">Abl</div>
<div class="t" style="left:1647px;top:153px;font-size:18px;color:#aaa">.*</div>
<div class="t" style="left:1678px;top:155px;font-size:14.500px;color:#ccc">1 中的 1</div>
<svg class="i" style="left:1770px;top:155px" width="16" height="17" fill="none" stroke="#bbb" stroke-width="1.200"><path d="M8 17V1M1 8l7-7 7 7"/></svg>
<svg class="i" style="left:1799px;top:155px" width="16" height="17" fill="none" stroke="#bbb" stroke-width="1.200"><path d="M8 0v16M1 9l7 7 7-7"/></svg>
<svg class="i" style="left:1826px;top:153px" width="19" height="13" stroke="#777" stroke-width="1.200"><path d="M3 1h16M0 6.500h18M0 12h12"/></svg>
<svg class="i" style="left:1862px;top:157px" width="12" height="12" stroke="#bbb" stroke-width="1.300"><path d="M1 1l10 10M11 1 1 11"/></svg>

<!-- sogou -->
<div class="a" style="left:1650px;top:111px;width:237px;height:29px;background:#fff"></div>
<div class="a" style="left:1634px;top:108px;width:31px;height:32px;background:#f26a1b;border-radius:4px;transform:rotate(-8deg)"></div>
<div class="t" style="left:1639px;top:112px;font:bold 30px/28px 'Liberation Sans',sans-serif;color:#fff">S</div>
<div class="t" style="left:1672px;top:116px;font-size:18px;font-weight:bold;color:#1a6fc4">英</div>
<div class="t" style="left:1703px;top:111px;font-size:20px;font-weight:bold;color:#1a6fc4">•,</div>
<svg class="i" style="left:1725px;top:115px" width="22" height="22" fill="none" stroke="#1a6fc4" stroke-width="2"><circle cx="11" cy="11" r="9.500"/><path d="M8 7v3M14 7v3M6 13q5 5 10 0"/></svg>
<svg class="i" style="left:1756px;top:114px" width="16" height="24" fill="none" stroke="#1a6fc4" stroke-width="2"><rect x="4" y="1" width="8" height="14" rx="4" fill="#1a6fc4"/><path d="M1 10q0 8 7 8t7-8M8 18v4M4 23h8"/></svg>
<svg class="i" style="left:1780px;top:117px" width="20" height="18"><rect width="20" height="18" rx="2" fill="#1a6fc4"/><path d="M3 5h14M3 9h14" stroke="#fff" stroke-width="2" stroke-dasharray="2 1"/><path d="M5 13h10" stroke="#fff" stroke-width="2"/></svg>
<svg class="i" style="left:1809px;top:115px" width="22" height="22"><circle cx="9" cy="5" r="4" fill="#a9b5c2"/><path d="M1 21q0-11 8-11h3v11z" fill="#a9b5c2"/><path d="M9 13h13v8H9z" fill="#dfe5ea"/><path d="M9 15h13M9 18h13" stroke="#a9b5c2"/></svg>
<svg class="i" style="left:1836px;top:116px" width="18" height="20"><path d="M5 0h8l5 4-3 4-1-1v13H4V7L3 8 0 4z" fill="#1a6fc4"/></svg>
<svg class="i" style="left:1864px;top:117px" width="17" height="18" fill="#1a6fc4"><rect width="7.500" height="8" rx="1"/><rect x="9.500" width="7.500" height="8" rx="1"/><rect y="10" width="7.500" height="8" rx="1"/><rect x="9.500" y="10" width="7.500" height="8" rx="1"/></svg>

<!-- bottom panel -->
<div class="a" style="left:876px;top:630px;width:1043px;height:311px;background:#242424"></div>
<div class="a" style="left:876px;top:630px;width:1043px;height:37px;background:#383838;border-top:1px solid #4a4a4a"></div>
<div class="t tw" style="left:901px">构建</div><div class="t tw" style="left:954px;color:#e0e0e0">调试器</div>
<div class="a" style="left:954px;top:664px;width:41px;height:1px;background:#ddd"></div>
<div class="a" style="left:1005px;top:638px;width:34px;height:22px;border-radius:11px;background:#c8403a"></div>
<div class="c" style="left:1022px;top:639px;font-size:14px;color:#fff">1, 6</div>
<div class="t tw" style="left:1064px">问题</div><div class="t tw" style="left:1116px">输出</div><div class="t tw" style="left:1169px">终端</div><div class="t tw" style="left:1221px">代码质量</div>
<svg class="i" style="left:1840px;top:648px" width="14" height="8" fill="none" stroke="#ccc" stroke-width="1.300"><path d="M1 7l6-6 6 6"/></svg>
<svg class="i" style="left:1881px;top:647px" width="11" height="11" stroke="#ccc" stroke-width="1.300"><path d="M0 0l11 11M11 0 0 11"/></svg>

<div class="a" style="left:876px;top:667px;width:1043px;height:33px;background:#292a2d;border-bottom:1px solid #444"></div>
<svg class="i" style="left:889px;top:675px" width="17" height="18" fill="none" stroke="#888" stroke-width="1.300"><path d="M6 15H1V1h13v6"/><path d="M7 6l9 4-4 1.500 3 4-2 1.500-3-4L7 15z" fill="#888" stroke="none"/></svg>
<div class="a" style="left:919px;top:672px;width:1px;height:22px;background:#444"></div>
<div class="a" style="left:995px;top:667px;width:82px;height:33px;background:#000"></div>
<div class="t dv" style="left:942px">Wxml</div><div class="t dv" style="left:1009px;color:#c8d8e8">Console</div><div class="t dv" style="left:1092px;font-size:14.2px">Sources</div><div class="t dv" style="left:1173px">Network</div><div class="t dv" style="left:1259px">Performance</div><div class="t dv" style="left:1372px">Memory</div><div class="t dv" style="left:1457px">AppData</div><div class="t dv" style="left:1544px">Storage</div>
<svg class="i" style="left:1621px;top:678px" width="11" height="11" fill="none" stroke="#999" stroke-width="1.300"><path d="M1 1l4 4.500-4 4.500M6 1l4 4.500-4 4.500"/></svg>
<div class="a" style="left:1734px;top:678px;width:12px;height:12px;border-radius:50%;background:#e5363a"></div>
<svg class="i" style="left:1737px;top:681px" width="6" height="6" stroke="#fff" stroke-width="1.300"><path d="M0 0l6 6M6 0 0 6"/></svg>
<div class="t" style="left:1751px;top:674px;font-size:14.500px;color:#ccc">1</div>
<svg class="i" style="left:1767px;top:677px" width="13" height="12"><path d="M6.500 0 13 12H0z" fill="#f2b500"/><path d="M6.500 4v4M6.500 9v1.500" stroke="#333"/></svg>
<div class="t" style="left:1785px;top:674px;font-size:14.500px;color:#ccc">6</div>
<div class="a" style="left:1806px;top:673px;width:1px;height:20px;background:#444"></div>
<svg class="i" style="left:1821px;top:675px" width="17" height="17" viewBox="-1 -1 22 22"><use href="#ge"/></svg>
<div class="a" style="left:1863px;top:675px;width:3px;height:3px;background:#8a8a8a;border-radius:50%"></div><div class="a" style="left:1863px;top:682px;width:3px;height:3px;background:#8a8a8a;border-radius:50%"></div><div class="a" style="left:1863px;top:689px;width:3px;height:3px;background:#8a8a8a;border-radius:50%"></div>
<svg class="i" style="left:1888px;top:674px" width="21" height="19" fill="none" stroke="#777" stroke-width="2"><rect x="6" y="1" width="14" height="11"/><path d="M4 5H1v13h14v-3" /></svg>

<!-- console rows -->
<div class="a" style="left:876px;top:733px;width:1026px;height:14px;background:#332b00;border-bottom:1px solid #665500"></div>
<div class="m" style="left:906px;top:728px;color:#d8d8d8">attribute selectors:(<span style="text-decoration:underline">./components/uni-phone/index.wxss:143:75</span>)</div>
<div class="a" style="left:876px;top:790px;width:1026px;height:51px;background:#332b00;border-top:1px solid #665500;border-bottom:1px solid #665500"></div>
<div class="a" style="left:876px;top:815px;width:1026px;height:1px;background:#665500"></div>
<div class="a" style="left:876px;top:841px;width:1026px;height:1px;background:#665500"></div>
<div class="a" style="left:876px;top:866px;width:1026px;height:43px;background:#290000;border-top:1px solid #5c0000;border-bottom:1px solid #5c0000"></div>

<div class="t" style="left:889px;top:750px;font-size:9px;color:#888">▼</div>
<div class="m bd" style="left:906px;top:752px;color:#e0e0e0">Mon Jul 24 2023 11:36:15 GMT+0800 (<i>中国标准时间</i>) <i>配置中关闭合法域名、</i>web-view<i>（业务域名）、</i>TLS <i>版</i></div>
<div class="m bd" style="left:906px;top:770px;color:#e0e0e0"><i>本以及</i> HTTPS <i>证书检查</i></div>
<div class="m lk" style="top:752px">VM16_asdebug.js:1</div>
<svg class="i" style="left:902px;top:796px" width="13" height="12"><path d="M6.500 0 13 12H0z" fill="#f2b500"/><path d="M6.500 4v4M6.500 9v1.500" stroke="#333"/></svg>
<div class="t" style="left:926px;top:793px;font-size:9px;color:#999">▶</div>
<div class="m" style="left:937px;top:795px;color:#e8e8e8"><i>工具未校验合法域名、</i>web-view<i>（业务域名）、</i>TLS <i>版本以及</i> HTTPS <i>证书。</i></div>
<div class="m lk" style="top:795px">VM16_asdebug.js:1</div>
<svg class="i" style="left:884px;top:821px" width="13" height="12"><path d="M6.500 0 13 12H0z" fill="#f2b500"/><path d="M6.500 4v4M6.500 9v1.500" stroke="#333"/></svg>
<div class="m" style="left:906px;top:821px;color:#e8e8e8">[pages/index/index] [Component] &lt;scroll-view&gt;: <i>设置</i> enable-flex <i>属性以使</i> flexbox <i>布局生效</i></div>
<div class="m" style="left:906px;top:847px">[system] Launch Time: 26660 ms</div>
<div class="m lk" style="top:847px">WAServiceMainContext.js:2</div>
<div class="a" style="left:885px;top:872px;width:12px;height:12px;border-radius:50%;background:#e5363a"></div>
<svg class="i" style="left:888px;top:875px" width="6" height="6" stroke="#fff" stroke-width="1.300"><path d="M0 0l6 6M6 0 0 6"/></svg>
<div class="t" style="left:908px;top:871px;font-size:9px;color:#bbb">▶</div>
<div class="m" style="left:918px;top:872px;color:#f28b82">GET <span style="color:#d8d8d8;text-decoration:underline">http://localhost:8080/user/shop/status</span> net::ERR_CONNECTION_REFUSED</div>
<div class="m lk" style="top:872px">VM16_asdebug.js:1</div>
<div class="m" style="left:906px;top:890px;color:#f28b82">(env: Windows,mp,1.06.2306020; lib: 2.24.2)</div>
<svg class="i" style="left:888px;top:917px" width="7" height="9" fill="none" stroke="#3b82f0" stroke-width="1.500"><path d="M1 0l4.500 4.500L1 9"/></svg>

<!-- console toolbar (above clipped row) -->
<div class="a" style="left:876px;top:700px;width:1043px;height:34px;background:#292a2d;border-bottom:1px solid #555"></div>
<svg class="i" style="left:886px;top:709px" width="20" height="18" fill="none" stroke="#777" stroke-width="1.300"><rect x=".7" y=".7" width="18" height="16"/><path d="M6 1v16"/><path d="M10 5l6 4-6 4z" fill="#888" stroke="none"/></svg>
<svg class="i" style="left:924px;top:709px" width="17" height="17" fill="none" stroke="#888" stroke-width="2"><circle cx="8.500" cy="8.500" r="7"/><path d="M3.500 3.500l10 10"/></svg>
<div class="a" style="left:954px;top:707px;width:1px;height:20px;background:#444"></div>
<div class="t" style="left:966px;top:708px;font-size:14.600px;color:#b8c4d4">appservice (#1)</div>
<svg class="i" style="left:1117px;top:712px" width="9" height="8"><path d="M0 0h9L4.500 8z" fill="#888"/></svg>
<div class="a" style="left:1138px;top:707px;width:1px;height:20px;background:#444"></div>
<svg class="i" style="left:1151px;top:710px" width="20" height="14"><path fill-rule="evenodd" d="M0 7q10-13 20 0Q10 20 0 7zm10-3.500a3.500 3.500 0 1 0 0 7 3.500 3.500 0 0 0 0-7z" fill="#888"/></svg>
<div class="a" style="left:1184px;top:707px;width:1px;height:20px;background:#444"></div>
<div class="a" style="left:1193px;top:704px;width:217px;height:26px;background:#202124;border:1px solid #555"></div>
<div class="t" style="left:1199px;top:708px;font-size:14.600px;color:#ccc">Filter</div>
<div class="t" style="left:1421px;top:708px;font-size:14.600px;color:#b8c4d4">Default levels</div>
<svg class="i" style="left:1515px;top:712px" width="9" height="8"><path d="M0 0h9L4.500 8z" fill="#888"/></svg>
<div class="a" style="left:1805px;top:707px;width:1px;height:20px;background:#444"></div>
<div class="t" style="left:1817px;top:708px;font-size:14.600px;color:#777">7 hidden</div>
<svg class="i" style="left:1891px;top:708px" width="17" height="17" viewBox="-1 -1 22 22"><use href="#ge"/></svg>

<!-- scroll column -->
<div class="a" style="left:1902px;top:734px;width:17px;height:126px;background:#2e2e2e"></div>
<div class="a" style="left:1902px;top:860px;width:17px;height:81px;background:#3a3a3a"></div>
<div class="a" style="left:1909px;top:801px;width:9px;height:60px;border:1px solid #888;border-radius:4px;overflow:hidden;background:#222"><div class="a" style="left:0;top:31px;width:9px;height:28px;background:#3fa85a"></div></div>
</body></html>
